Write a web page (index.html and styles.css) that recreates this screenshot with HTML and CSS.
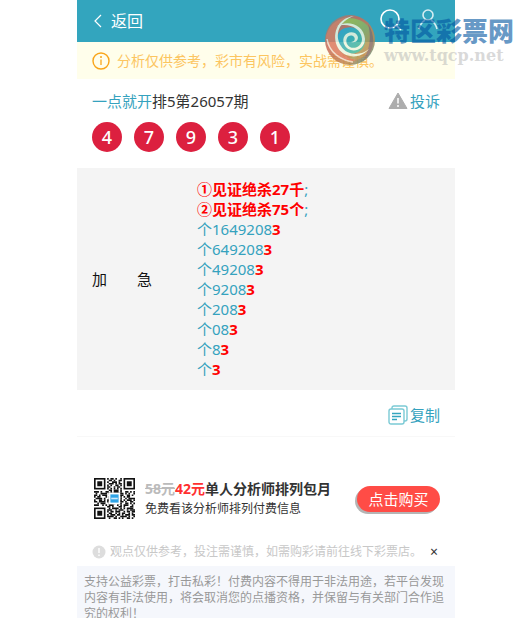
FILE: index.html
```
<!DOCTYPE html>
<html lang="zh-CN">
<head>
<meta charset="utf-8">
<meta name="viewport" content="width=device-width, initial-scale=1">
<title>一点就开排5第26057期</title>
<link rel="stylesheet" href="styles.css">
</head>

<body>
<div class="page">

<header class="topbar">
  <a class="back" href="#">
    <svg width="10" height="16" viewBox="0 0 10 16"><path d="M8 2 L2 8 L8 14" fill="none" stroke="#fff" stroke-width="1.2"/></svg>
    返回
  </a>
  <nav class="tools">
    <a href="#" aria-label="搜索">
      <svg width="24" height="24" viewBox="0 0 24 24"><g fill="none" stroke="#fff" stroke-width="1.6"><circle cx="11" cy="10" r="9"/><path d="M17 16 L22 21"/></g></svg>
    </a>
    <a href="#" aria-label="我的">
      <svg width="24" height="24" viewBox="0 0 24 24"><g fill="none" stroke="#d5edf2" stroke-width="1.6"><circle cx="11" cy="6" r="5"/><path d="M8 11 C5 13 3 16 2 20 M14 11 C17 13 19 16 20 20"/></g></svg>
    </a>
  </nav>
</header>

<div class="notice">
  <svg width="18" height="18" viewBox="0 0 18 18"><circle cx="9" cy="9" r="8" fill="none" stroke="#f9a51a" stroke-width="1.4"/><path d="M9 7.500 V13" stroke="#f9a51a" stroke-width="1.3"/><circle cx="9" cy="5" r="1" fill="#f9a51a"/></svg>
  <span>分析仅供参考，彩市有风险，实战需谨慎。</span>
</div>

<section class="issue">
  <div class="issue-head">
    <h1><a href="#">一点就开</a>排5第26057期</h1>
    <a class="action" href="#">
      <svg width="20" height="18" viewBox="0 0 20 18"><path d="M10 1 L19 16.500 H1 Z" fill="#adadad" stroke="#adadad" stroke-linejoin="round"/><path d="M10 6 V11.500 M10 13 V15" stroke="#fff" stroke-width="1.5"/></svg>
      投诉
    </a>
  </div>
  <ol class="balls">
    <li>4</li>
    <li>7</li>
    <li>9</li>
    <li>3</li>
    <li>1</li>
  </ol>
</section>

<section class="plan">
  <div class="plan-name">加　　急</div>
  <div class="plan-list">
    <p><b>①见证绝杀27千</b>;</p>
    <p><b>②见证绝杀75个</b>;</p>
    <p>个1649208<b>3</b></p>
    <p>个649208<b>3</b></p>
    <p>个49208<b>3</b></p>
    <p>个9208<b>3</b></p>
    <p>个208<b>3</b></p>
    <p>个08<b>3</b></p>
    <p>个8<b>3</b></p>
    <p>个<b>3</b></p>
  </div>
</section>

<div class="copy-row">
  <button class="action" type="button">
    <svg width="20" height="20" viewBox="0 0 20 20"><g fill="none" stroke="#7bcad5" stroke-width="1.4"><path d="M4 4 V3 Q4 1 6 1 H17 Q19 1 19 3 V14 Q19 16 17 16 H16"/><rect x="1" y="4" width="15" height="15" rx="2"/></g><path d="M4 8.500 H13 M4 11.500 H13 M4 14.500 H9" stroke="#35a5be" stroke-width="1.3"/></svg>
    复制
  </button>
</div>

<section class="promo">
  <svg class="qr" width="41" height="41" viewBox="0 0 25 25">
    <g stroke="#111" stroke-width="1">
      <path stroke-dasharray="1 1 2 1 1 2" d="M8 .5 H17"/>
      <path stroke-dasharray="2 1 1 2" d="M9 1.500 H17"/>
      <path stroke-dasharray="1 2 3 1" d="M8 2.500 H17"/>
      <path stroke-dasharray="3 1 1 1" d="M9 3.500 H17"/>
      <path stroke-dasharray="1 1 1 2 2 1" d="M8 4.500 H17"/>
      <path stroke-dasharray="2 2 1 1" d="M8 5.500 H17"/>
      <path stroke-dasharray="1 1" d="M8 6.500 H17"/>
      <path stroke-dasharray="2 1 3 1" d="M9 7.500 H17"/>
      <path stroke-dasharray="3 1 1 2 2 1 1 1" d="M0 8.500 H25"/>
      <path stroke-dasharray="1 2 4 1 1 1" d="M1 9.500 H25"/>
      <path stroke-dasharray="2 1 1 1 3 2" d="M0 10.500 H25"/>
      <path stroke-dasharray="1 1 2 3 1 1" d="M0 11.500 H25"/>
      <path stroke-dasharray="4 1 1 2 1 1" d="M1 12.500 H25"/>
      <path stroke-dasharray="1 2 2 1 1 1 3 1" d="M0 13.500 H25"/>
      <path stroke-dasharray="2 1 4 1 1 2" d="M0 14.500 H25"/>
      <path stroke-dasharray="1 1 3 2 2 1" d="M2 15.500 H25"/>
      <path stroke-dasharray="3 2 1 1 1 1" d="M0 16.500 H25"/>
      <path stroke-dasharray="2 1 1 3" d="M8 17.500 H25"/>
      <path stroke-dasharray="1 1 4 1 1 1" d="M9 18.500 H25"/>
      <path stroke-dasharray="3 2 1 1" d="M8 19.500 H25"/>
      <path stroke-dasharray="1 1 2 1 3 2" d="M8 20.500 H25"/>
      <path stroke-dasharray="2 2 1 1 1 1" d="M9 21.500 H25"/>
      <path stroke-dasharray="1 1 3 1 2 1" d="M8 22.500 H25"/>
      <path stroke-dasharray="4 1 1 2" d="M8 23.500 H25"/>
      <path stroke-dasharray="1 2 2 1 1 1" d="M9 24.500 H25"/>
    </g>
    <g fill="none" stroke="#111">
      <rect x=".5" y=".5" width="6" height="6"/>
      <rect x="18.500" y=".5" width="6" height="6"/>
      <rect x=".5" y="18.500" width="6" height="6"/>
    </g>
    <path d="M2 2h3v3h-3z M20 2h3v3h-3z M2 20h3v3h-3z" fill="#111"/>
    <rect x="9" y="9" width="7" height="7" fill="#fff"/>
    <rect x="10" y="10" width="5" height="5" fill="#2fa4e7"/>
    <path d="M10.500 12.500h4" stroke="#cfeafb"/>
  </svg>
  <div class="promo-text">
    <h2><del>58元</del><em>42元</em>单人分析师排列包月</h2>
    <p>免费看该分析师排列付费信息</p>
  </div>
  <button class="buy" type="button">点击购买</button>
</section>

<div class="tip">
  <svg width="14" height="14" viewBox="0 0 14 14"><circle cx="7" cy="7" r="6.500" fill="#ddd"/><path d="M7 3 V8 M7 9.500 V11" stroke="#fff" stroke-width="1.4"/></svg>
  <span>观点仅供参考，投注需谨慎，如需购彩请前往线下彩票店。</span>
  <button type="button" aria-label="关闭">×</button>
</div>

<footer class="legal">支持公益彩票，打击私彩！付费内容不得用于非法用途，若平台发现内容有非法使用，将会取消您的点播资格，并保留与有关部门合作追究的权利！</footer>

</div>

<div class="watermark">
  <svg width="52" height="60" viewBox="0 0 52 60">
    <defs>
      <linearGradient id="rim" x1="0" y1="0" x2="1" y2="1">
        <stop offset="0" stop-color="#7d8f8c"/>
        <stop offset=".35" stop-color="#c96a58"/>
        <stop offset=".7" stop-color="#c08a50"/>
        <stop offset="1" stop-color="#2f8f9a"/>
      </linearGradient>
      <linearGradient id="leaf" x1="0" y1="0" x2="1" y2="1">
        <stop offset="0" stop-color="#a9c23e"/>
        <stop offset=".5" stop-color="#8fae62"/>
        <stop offset="1" stop-color="#e07a45"/>
      </linearGradient>
      <linearGradient id="core" x1="0" y1="0" x2="1" y2="1">
        <stop offset="0" stop-color="#2e9fd0"/>
        <stop offset="1" stop-color="#4dbf8e"/>
      </linearGradient>
    </defs>
    <circle cx="26" cy="30" r="25" fill="url(#rim)"/>
    <path d="M14 14 C22 3 45 8 49 26 C51 43 34 55 21 48 C37 47 44 33 37 23 C31 15 21 12 14 14Z" fill="url(#leaf)"/>
    <path d="M44 14 C52 26 51 42 39 51 C45 41 48 28 44 14Z" fill="#8c6f66"/>
    <path d="M2 26 C6 12 16 8 24 7 C12 13 8 26 14 38 C18 45 26 49 33 50 C18 54 3 44 2 26Z" fill="#dc7a5e"/>
    <path d="M17 20 C27 13 42 20 41 32 C39 44 25 48 17 38 C11 31 13 24 17 20Z" fill="url(#core)"/>
    <g fill="#eef5e0">
      <path d="M30 6 C13 8 7 25 14 38 C20 48 36 50 45 39 C37 46 23 46 17 36 C10 25 15 11 30 6Z"/>
      <path d="M12 17 C22 9 40 14 41 29 C41 41 25 45 20 34 C17 26 24 20 31 23 C37 27 33 34 27 32 C31 32 32 28 29 26 C24 24 21 29 23 34 C27 41 38 38 38 29 C37 17 22 12 12 17Z"/>
    </g>
    <path d="M3 29 C5 42 16 50 29 52" fill="none" stroke="#f0dccb" stroke-width="1.500"/>
  </svg>
  <div class="watermark-text">
    <strong>特区彩票网</strong>
    <span>www.tqcp.net</span>
  </div>
</div>

</body>
</html>
```
FILE: styles.css
```
* {
  box-sizing: border-box;
}

body {
  position: relative;
  height: 100vh;
  margin: 0;
  overflow: hidden;
  background: #fff;
  color: #333;
  font-family: "Noto Sans", "Noto Sans CJK SC", sans-serif;
  font-size: 15px;
  line-height: 20px;
}

h1, h2, p, ol {
  margin: 0;
  padding: 0;
}

a {
  color: #35a2be;
  text-decoration: none;
}

button {
  padding: 0;
  border: none;
  background: none;
  font: inherit;
  cursor: pointer;
}

svg {
  display: block;
  flex: none;
}

.page {
  margin: 0 68px 0 77px;
}

/* header */
.topbar {
  display: flex;
  align-items: center;
  justify-content: space-between;
  height: 42px;
  padding: 0 14px 0 16px;
  background: #33a5be;
}

.back {
  display: flex;
  align-items: center;
  gap: 8px;
  color: #fff;
  font-size: 16px;
}

.tools {
  display: flex;
  gap: 14px;
}

.notice {
  display: flex;
  align-items: center;
  gap: 7px;
  height: 37px;
  padding: 0 15px;
  background: #fffeeb;
  color: #fcc560;
  font-size: 14px;
  white-space: nowrap;
}

/* issue title and drawn numbers */
.issue {
  padding: 12px 15px 16px;
}

.issue-head {
  display: flex;
  align-items: center;
  justify-content: space-between;
}

.issue-head h1 {
  font-size: 15px;
  font-weight: normal;
}

.action {
  display: flex;
  align-items: center;
  gap: 2px;
  color: #35a2be;
}

.balls {
  display: flex;
  gap: 12px;
  margin-top: 11px;
  list-style: none;
}

.balls li {
  width: 30px;
  height: 30px;
  border-radius: 50%;
  background: #dc203f;
  color: #fff;
  font-size: 18px;
  font-weight: 500;
  line-height: 30px;
  text-align: center;
}

.plan {
  display: grid;
  grid-template-columns: 105px 1fr;
  align-items: center;
  padding: 11px 15px;
  background: #f4f4f4;
  color: #35a2be;
}

.plan-name {
  color: #111;
}

.plan-list b {
  color: #f00;
}

.copy-row {
  display: flex;
  justify-content: flex-end;
  padding: 15px 15px 11px;
  border-bottom: 1px solid #f8f8f8;
}

/* monthly offer */
.promo {
  display: flex;
  align-items: center;
  padding: 41px 15px 19px 17px;
}

.promo-text {
  flex: 1;
  margin-left: 10px;
  font-size: 12px;
  white-space: nowrap;
}

.promo-text h2 {
  font-size: 14px;
}

.promo-text del {
  color: #bbb;
}

.promo-text em {
  color: #ff3030;
  font-style: normal;
}

.buy {
  width: 83px;
  height: 26px;
  border-radius: 13px;
  background: #ff4c46;
  box-shadow: -2px 2px 0 #b5b5b5;
  color: #fff;
}

.tip {
  display: flex;
  align-items: center;
  gap: 4px;
  height: 28px;
  padding: 0 17px 0 15px;
  color: #c8c8c8;
  font-size: 12px;
  white-space: nowrap;
}

.tip button {
  margin-left: auto;
  color: #333;
  font-size: 14px;
}

.legal {
  padding: 8px 7px;
  background: #f5f7fc;
  color: #999;
  font-size: 12px;
  line-height: 16px;
}

/* site mark over the header */
.watermark {
  position: absolute;
  top: 10px;
  right: 9px;
  display: flex;
  align-items: flex-start;
  gap: 8px;
  pointer-events: none;
}

.watermark svg {
  opacity: .85;
}

.watermark-text {
  display: flex;
  flex-direction: column;
  padding-top: 6px;
  white-space: nowrap;
}

.watermark strong {
  color: rgba(0, 84, 160, .6);
  font-size: 26px;
  font-weight: 900;
  line-height: 30px;
}

.watermark span {
  color: rgba(180, 180, 180, .5);
  font-family: "DejaVu Serif", serif;
  font-size: 16px;
  font-weight: bold;
  line-height: 20px;
}
```
